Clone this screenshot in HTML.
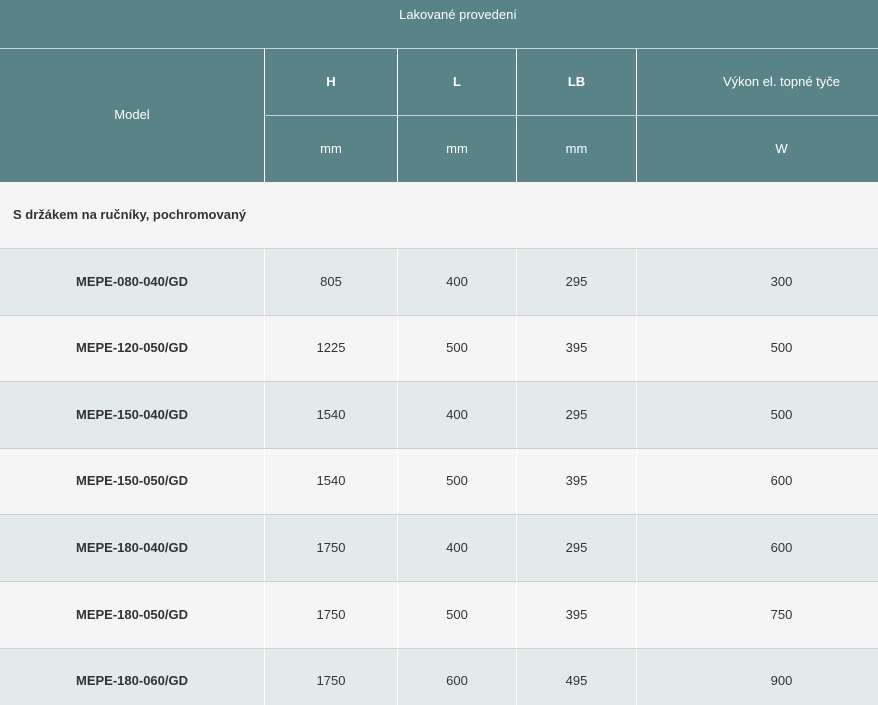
<!DOCTYPE html>
<html><head><meta charset="utf-8"><style>
body{margin:0;width:878px;height:705px;overflow:hidden;font-family:"Liberation Sans",Arial,sans-serif;font-size:13px;background:#f5f5f5}
.c{position:absolute;display:flex;align-items:center;justify-content:center;box-sizing:border-box;padding-bottom:2px}
.h{background:#5a8387;color:#fff}
</style></head><body>
<div style="position:relative;width:878px;height:705px;overflow:hidden">
<div class="c h" style="left:0;top:0;width:916px;height:48px;padding-bottom:20px">Lakované provedení</div>
<div style="position:absolute;left:0;top:48px;width:878px;height:1px;background:#c8d6d8"></div>
<div class="c h" style="left:0;top:49px;width:264px;height:133px">Model</div>
<div class="c h" style="left:265px;top:49px;width:132px;height:66px;font-weight:bold">H</div>
<div class="c h" style="left:398px;top:49px;width:118px;height:66px;font-weight:bold">L</div>
<div class="c h" style="left:517px;top:49px;width:119px;height:66px;font-weight:bold">LB</div>
<div class="c h" style="left:637px;top:49px;width:289px;height:66px">Výkon el. topné tyče</div>
<div class="c h" style="left:265px;top:116px;width:132px;height:66px">mm</div>
<div class="c h" style="left:398px;top:116px;width:118px;height:66px">mm</div>
<div class="c h" style="left:517px;top:116px;width:119px;height:66px">mm</div>
<div class="c h" style="left:637px;top:116px;width:289px;height:66px">W</div>
<div style="position:absolute;left:264px;top:49px;width:1px;height:133px;background:#fff"></div>
<div style="position:absolute;left:397px;top:49px;width:1px;height:133px;background:#fff"></div>
<div style="position:absolute;left:516px;top:49px;width:1px;height:133px;background:#fff"></div>
<div style="position:absolute;left:636px;top:49px;width:1px;height:133px;background:#fff"></div>
<div style="position:absolute;left:265px;top:115px;width:613px;height:1px;background:#c8d6d8"></div>
<div class="c" style="left:0;top:182px;width:878px;height:66px;justify-content:flex-start;padding-left:13px;font-weight:bold;color:#333;background:#f5f5f5">S držákem na ručníky, pochromovaný</div>
<div id="rows"></div>
</div>
<script>
var d=[["MEPE-080-040/GD",805,400,295,300],["MEPE-120-050/GD",1225,500,395,500],["MEPE-150-040/GD",1540,400,295,500],["MEPE-150-050/GD",1540,500,395,600],["MEPE-180-040/GD",1750,400,295,600],["MEPE-180-050/GD",1750,500,395,750],["MEPE-180-060/GD",1750,600,495,900]];
var cols=[[0,264],[265,132],[398,118],[517,119],[637,289]];
var h='';
d.forEach(function(r,i){var t=248+i*66.6;var bg=i%2?'#f5f5f5':'#e3eaec';
h+='<div style="position:absolute;left:0;top:'+t+'px;width:878px;height:67px;background:'+bg+';border-top:1px solid #cfcfcf;box-sizing:border-box"></div>';
r.forEach(function(v,j){h+='<div class="c" style="left:'+cols[j][0]+'px;top:'+(t+1)+'px;width:'+cols[j][1]+'px;height:66px;color:#333;'+(j==0?'font-weight:bold;':'')+'">'+v+'</div>';});
[264,397,516,636].forEach(function(x){h+='<div style="position:absolute;left:'+x+'px;top:'+(t+1)+'px;width:1px;height:66px;background:#fff"></div>';});
});
document.getElementById('rows').outerHTML=h;
</script>
</body></html>
